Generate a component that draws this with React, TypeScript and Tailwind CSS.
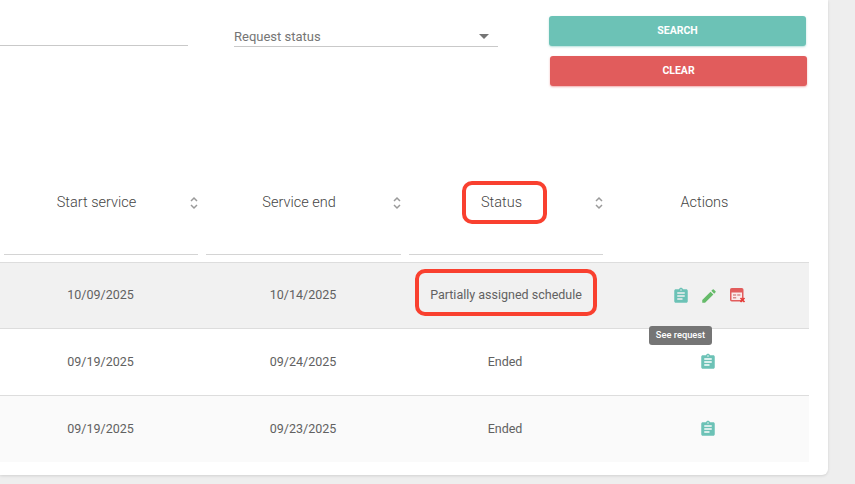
import { MdAssignment, MdEdit } from 'react-icons/md';

const rows = [
  { start: '10/09/2025', end: '10/14/2025', status: 'Partially assigned schedule', full: true, bg: 'bg-[#f1f1f1]', h: 'h-[66px]' },
  { start: '09/19/2025', end: '09/24/2025', status: 'Ended', full: false, bg: 'bg-white', h: 'h-[67px]' },
  { start: '09/19/2025', end: '09/23/2025', status: 'Ended', full: false, bg: 'bg-[#fafafa]', h: 'h-[66px]' },
];

function SortIcon() {
  return (
    <svg width="10" height="14" viewBox="0 0 10 14" fill="none" stroke="#9a9a9a" strokeWidth="1.5" className="-mr-px shrink-0">
      <path d="M2 5l3-3 3 3" />
      <path d="M2 9l3 3 3-3" />
    </svg>
  );
}

function CalendarX() {
  return (
    <svg width="16" height="15" viewBox="0 0 16 15" className="ml-[12px] shrink-0">
      <rect x="0.75" y="0.75" width="12" height="12" rx="1" fill="#fbeaea" stroke="#e25c5c" strokeWidth="1.5" />
      <rect x="1" y="1" width="11.5" height="3.5" fill="#e25c5c" />
      <path d="M3 6.2h3.2v1.6H3zM7.2 6.2h3.2v1.6H7.2zM3 9h3.2v1.6H3z" fill="#d98b8b" />
      <path d="M10.5 10l4 4M14.5 10l-4 4" stroke="#e53935" strokeWidth="1.7" />
    </svg>
  );
}

function HeaderCell({ label }: { label: string }) {
  return (
    <div className="flex h-[72px] flex-col px-1">
      <div className="flex h-[39px] items-center">
        <span className="flex-1 text-center">{label}</span>
        <SortIcon />
      </div>
      <div className="mt-auto h-px bg-[#d4d4d4]" />
    </div>
  );
}

export default function App() {
  return (
    <div className="h-[484px] w-[855px] overflow-hidden bg-[#eeeeee] font-['Roboto',sans-serif] text-[#555]">
      <div className="relative h-[475px] w-[828px] rounded-br-[6px] bg-white shadow-[0_1px_3px_rgba(0,0,0,0.12)]">
        {/* Filters */}
        <div className="flex h-[166px] items-start">
          <div className="mt-[45px] h-px w-[188px] bg-[#c9c9c9]" />
          <div className="ml-[46px] mt-[26px] flex h-[21px] w-[264px] items-center justify-between border-b border-[#c9c9c9] pr-[9px] pt-px text-[13px] text-[#757575]">
            <span>Request status</span>
            <span className="h-0 w-0 border-x-[5px] border-t-[5px] border-x-transparent border-t-[#757575]" />
          </div>
          <div className="ml-[51px] mt-[16px] flex w-[258px] flex-col gap-[10px] text-[10.5px] font-bold text-white">
            <button className="mr-px flex h-[30px] items-center justify-center rounded-[3px] bg-[#6cc2b6] shadow-[0_1px_2px_rgba(108,194,182,0.5)]">SEARCH</button>
            <button className="ml-px flex h-[30px] items-center justify-center rounded-[3px] bg-[#e15c5c] shadow-[0_1px_2px_rgba(225,92,92,0.5)]">CLEAR</button>
          </div>
        </div>

        {/* Table */}
        <div className="w-[809px] text-[14.5px] font-light text-[#444]">
          <div className="grid h-[97px] grid-cols-[202px_203px_202px_202px] items-start border-b border-[#dddddd] pt-[17px]">
            <HeaderCell label="Start service" />
            <HeaderCell label="Service end" />
            <HeaderCell label="Status" />
            <div className="flex h-[39px] items-center justify-center pr-[7px]">Actions</div>
          </div>
          {rows.map((r, i) => (
            <div key={i} className={`grid grid-cols-[202px_203px_202px_202px] items-center border-b border-[#dddddd] text-[12.5px] font-normal text-[#616161] last:border-b-0 ${r.h} ${r.bg}`}>
              <div className="pr-px text-center">{r.start}</div>
              <div className="pr-px text-center">{r.end}</div>
              <div className={r.full ? 'text-center' : 'pr-[2px] text-center'}>{r.status}</div>
              <div className="flex items-center justify-center">
                {r.full ? (
                  <div className="flex items-center pl-[2px]">
                    <MdAssignment size={18} className="text-[#6cc2b6]" />
                    <MdEdit size={18} className="ml-[10px] text-[#66bb6a]" />
                    <CalendarX />
                  </div>
                ) : (
                  <MdAssignment size={18} className="text-[#6cc2b6]" />
                )}
              </div>
            </div>
          ))}
        </div>

        {/* Tooltip */}
        <div className="absolute left-[649px] top-[326px] flex h-[19px] w-[63px] items-center justify-center rounded-[3px] bg-[#757575] pb-px text-[9.3px] font-medium text-white">
          See request
        </div>

        {/* Annotations */}
        <div className="absolute left-[462px] top-[181px] h-[43px] w-[85px] rounded-[10px] border-4 border-[#f9402f]" />
        <div className="absolute left-[415px] top-[269px] h-[47px] w-[182px] rounded-[10px] border-4 border-[#f9402f]" />
      </div>
    </div>
  );
}
